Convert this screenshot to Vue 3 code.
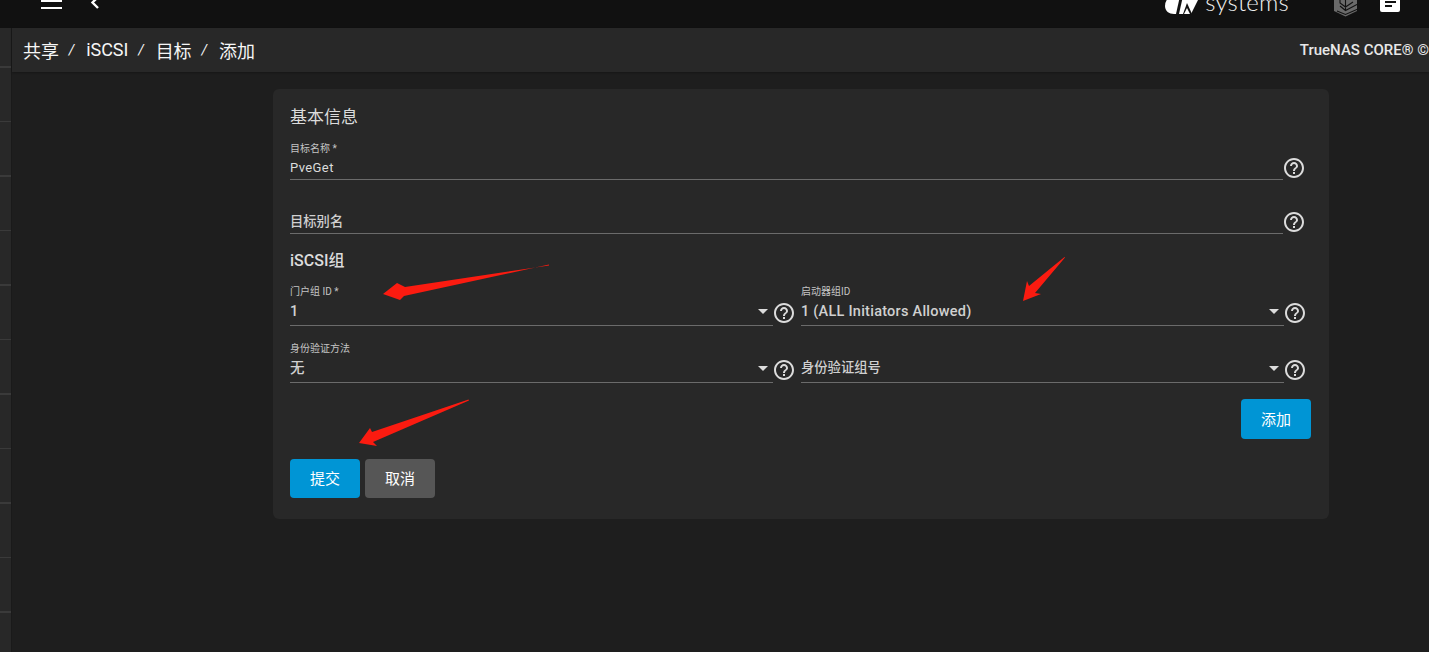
<template>
  <div class="page">
    <header class="topbar">
      <div class="top-left">
        <svg class="icon-menu" width="22" height="10" viewBox="0 0 22 10"><path d="M0 0h21v2H0zM0 7h21v2H0z" fill="#fff"/></svg>
        <svg class="icon-back" width="12" height="10" viewBox="0 0 12 10"><path d="M9 -3 3.5 2.5 9 8" fill="none" stroke="#fff" stroke-width="2.4"/></svg>
      </div>
      <div class="top-right">
        <svg class="logo-mark" width="37" height="16" viewBox="0 0 37 16">
          <path d="M8 -4A11 11 0 0 0 1 6C1 11 5 14 10 14H12L16 -4Z" fill="#fff"/>
          <path d="M19 -4 15 14H27L36 -4Z" fill="#fff"/>
          <path d="M23 3 19 14H28Z" fill="#111"/>
          <path d="M20 14 23 8 26 14Z" fill="#fff"/>
        </svg>
        <span class="logo-text">systems</span>
        <svg class="icon-layers" width="24" height="17" viewBox="0 0 24 17">
          <path d="M0 0V11L11.5 16.5 23 11V0Z" fill="#6a6a6a"/>
          <path d="M11.5 0V11M6 0V3L11.5 7 19 2M6 6 11.5 10.5 24 4M3 11 11.5 14.5 24 9" fill="none" stroke="#111" stroke-width="1.1"/>
        </svg>
        <svg class="icon-notes" width="21" height="13" viewBox="0 0 21 13"><path d="M2 -6H18A2 2 0 0 1 20 -4V10A2 2 0 0 1 18 12H2A2 2 0 0 1 0 10V-4A2 2 0 0 1 2 -6Z" fill="#fff"/><path d="M5 1H16V3H5ZM5 5H12V7H5Z" fill="#111"/></svg>
      </div>
    </header>

    <div class="body">
      <aside class="rail">
        <div v-for="n in 11" :key="n" class="rail-tick"></div>
      </aside>
      <main class="main">
        <div class="crumbs">
          <div class="crumb-list">
            <template v-for="(c, i) in crumbs" :key="c">
              <span class="crumb">{{ c }}</span>
              <span v-if="i < crumbs.length - 1" class="crumb-sep">/</span>
            </template>
          </div>
          <span class="version">TrueNAS CORE® ©</span>
        </div>

        <section class="card">
          <h3 class="section-title">基本信息</h3>
          <div class="field-row first">
            <div class="field">
              <label class="small-label">目标名称 *</label>
              <div class="value strong">PveGet</div>
            </div>
            <svg class="help" viewBox="0 0 24 24"><path :d="helpPath" /></svg>
          </div>
          <div class="field-row second">
            <div class="field">
              <div class="value placeholder">目标别名</div>
            </div>
            <svg class="help" viewBox="0 0 24 24"><path :d="helpPath" /></svg>
          </div>

          <h4 class="group-title">iSCSI组</h4>
          <div class="select-grid">
            <div v-for="s in selects" :key="s.key" class="field-row">
              <div class="field select">
                <label v-if="s.label" class="small-label">{{ s.label }}</label>
                <div class="value" :class="s.label ? 'big' : 'placeholder'">{{ s.value }}</div>
                <span class="caret"></span>
              </div>
              <svg class="help" viewBox="0 0 24 24"><path :d="helpPath" /></svg>
            </div>
          </div>

          <div class="add-row">
            <button class="btn primary">添加</button>
          </div>
          <div class="actions">
            <button class="btn primary">提交</button>
            <button class="btn cancel">取消</button>
          </div>
        </section>
      </main>
    </div>

    <!-- red annotation arrows drawn over the screenshot -->
    <svg class="arrows" width="1429" height="652" viewBox="0 0 1429 652">
      <path d="M549 264.5 549 265.5 405 287 397 283 383 294 400 300 404 296Z" fill="#fb1b10"/>
      <path d="M1064.5 257 1029 286 1027 281 1023 301 1041 294 1035 293 1065 257.5Z" fill="#fb1b10"/>
      <path d="M468.5 399.5 372 432 370 428 359 443 377 446 373 442 469 400.5Z" fill="#fb1b10"/>
    </svg>
  </div>
</template>

<script setup>
const crumbs = ['共享', 'iSCSI', '目标', '添加']

const helpPath = 'M11 18h2v-2h-2v2zm1-16C6.48 2 2 6.48 2 12s4.48 10 10 10 10-4.48 10-10S17.52 2 12 2zm0 18c-4.41 0-8-3.59-8-8s3.59-8 8-8 8 3.59 8 8-3.59 8-8 8zm0-14c-2.21 0-4 1.79-4 4h2c0-1.1.9-2 2-2s2 .9 2 2c0 2-3 1.75-3 5h2c0-2.25 3-2.5 3-5 0-2.21-1.79-4-4-4z'

const selects = [
  { key: 'portal', label: '门户组 ID *', value: '1' },
  { key: 'initiator', label: '启动器组ID', value: '1 (ALL Initiators Allowed)' },
  { key: 'method', label: '身份验证方法', value: '无' },
  { key: 'group', label: '', value: '身份验证组号' }
]
</script>

<style>
html, body {
  margin: 0;
  background: #1e1e1e;
  overflow: hidden;
}
</style>

<style scoped>
.page {
  position: relative;
  width: 1429px;
  height: 652px;
  overflow: hidden;
  display: flex;
  flex-direction: column;
  background: #1e1e1e;
  font-family: Roboto, "Noto Sans CJK SC", sans-serif;
  color: #e4e4e4;
}

.topbar {
  flex: 0 0 28px;
  height: 28px;
  display: flex;
  justify-content: space-between;
  background: #111111;
  overflow: hidden;
}
.top-left {
  display: flex;
  align-items: flex-start;
  padding-left: 41px;
}
.icon-back {
  margin-left: 26px;
}
.top-right {
  display: flex;
  align-items: flex-start;
  padding-right: 28px;
}
.logo-mark {
  display: block;
}
.logo-text {
  margin: -13px 0 0 4px;
  font-family: Lato, sans-serif;
  font-weight: 300;
  font-size: 24px;
  line-height: 30px;
  letter-spacing: 0.2px;
  color: #f2f2f2;
}
.icon-layers {
  margin-left: 45px;
}
.icon-notes {
  margin-left: 22px;
}

.body {
  flex: 1;
  display: flex;
  min-height: 0;
}
.rail {
  width: 11px;
  flex: none;
  background: #282828;
  border-right: 1px solid #1a1a1a;
  display: flex;
  flex-direction: column;
  padding-top: 38px;
  gap: 53px;
}
.rail-tick {
  height: 1.5px;
  background: #3a3a3a;
}

.main {
  flex: 1;
  min-width: 0;
}
.crumbs {
  height: 44px;
  display: flex;
  align-items: center;
  justify-content: space-between;
  background: #282828;
  box-shadow: 0 1px 2px rgba(0, 0, 0, 0.25);
  white-space: nowrap;
  overflow: hidden;
}
.crumb-list {
  display: flex;
  align-items: center;
  padding: 0 0 1px 11px;
  font-size: 18px;
  letter-spacing: -0.1px;
  color: #f6f6f6;
}
.crumb-sep {
  margin: 0 12px 0 10px;
  font-size: 14px;
  font-style: italic;
}
.version {
  font-size: 15px;
  font-weight: 500;
  color: #e8e8e8;
}

.card {
  margin: 17px 100px 0 261px;
  height: 430px;
  box-sizing: border-box;
  padding: 17px 18px 0 17px;
  background: #282828;
  border-radius: 6px;
}
.section-title {
  margin: 0;
  font-size: 17px;
  line-height: 22px;
  font-weight: 400;
  color: #dcdcdc;
}
.group-title {
  margin: 16px 0 0;
  font-size: 16px;
  line-height: 22px;
  font-weight: 500;
  color: #dcdcdc;
}

.field-row {
  display: flex;
  align-items: flex-end;
}
.field-row.first {
  margin-top: 14px;
  margin-right: 5px;
}
.field-row.second {
  margin-top: 30px;
  margin-right: 5px;
}
.field {
  flex: 1;
  min-width: 0;
  position: relative;
  border-bottom: 1px solid #6b6b6b;
}
.small-label {
  display: block;
  font-size: 10px;
  line-height: 14px;
  color: #c4c4c4;
}
.value {
  font-size: 13px;
  line-height: 22px;
  color: #dcdcdc;
}
.value.strong {
  letter-spacing: 0.4px;
  height: 22px;
  margin-top: 1px;
}
.value.big {
  font-size: 14.5px;
  line-height: 24px;
  height: 25px;
  margin-top: 1px;
  letter-spacing: 0.25px;
  font-weight: 500;
  color: #d0d0d0;
}
.value.placeholder {
  font-size: 13.3px;
  line-height: 24px;
  font-weight: 500;
  height: 23px;
  color: #d0d0d0;
}
.select .value.placeholder {
  line-height: 22px;
  height: 25px;
}
.help {
  flex: none;
  width: 24px;
  height: 24px;
  margin-left: -1px;
  fill: #dcdcdc;
}

.select-grid {
  display: grid;
  grid-template-columns: 506px 506px;
  column-gap: 5px;
  row-gap: 16px;
  margin-top: 13px;
}
.select-grid .help {
  margin-bottom: 1px;
}
.caret {
  position: absolute;
  right: 5px;
  bottom: 11px;
  width: 0;
  height: 0;
  border-left: 5px solid transparent;
  border-right: 5px solid transparent;
  border-top: 5px solid #dcdcdc;
}

.add-row {
  display: flex;
  justify-content: flex-end;
  margin-top: 16px;
}
.actions {
  display: flex;
  gap: 5px;
  margin-top: 20px;
}
.btn {
  width: 70px;
  height: 39px;
  border: 0;
  border-radius: 4px;
  color: #ffffff;
  font-family: Roboto, "Noto Sans CJK SC", sans-serif;
  font-size: 15px;
  padding: 0 0 2px;
}
.btn.primary {
  background: #0095d5;
}
.btn.cancel {
  background: #565656;
}
.add-row .btn {
  height: 40px;
}

.arrows {
  position: absolute;
  left: 0;
  top: 0;
  pointer-events: none;
}
</style>
